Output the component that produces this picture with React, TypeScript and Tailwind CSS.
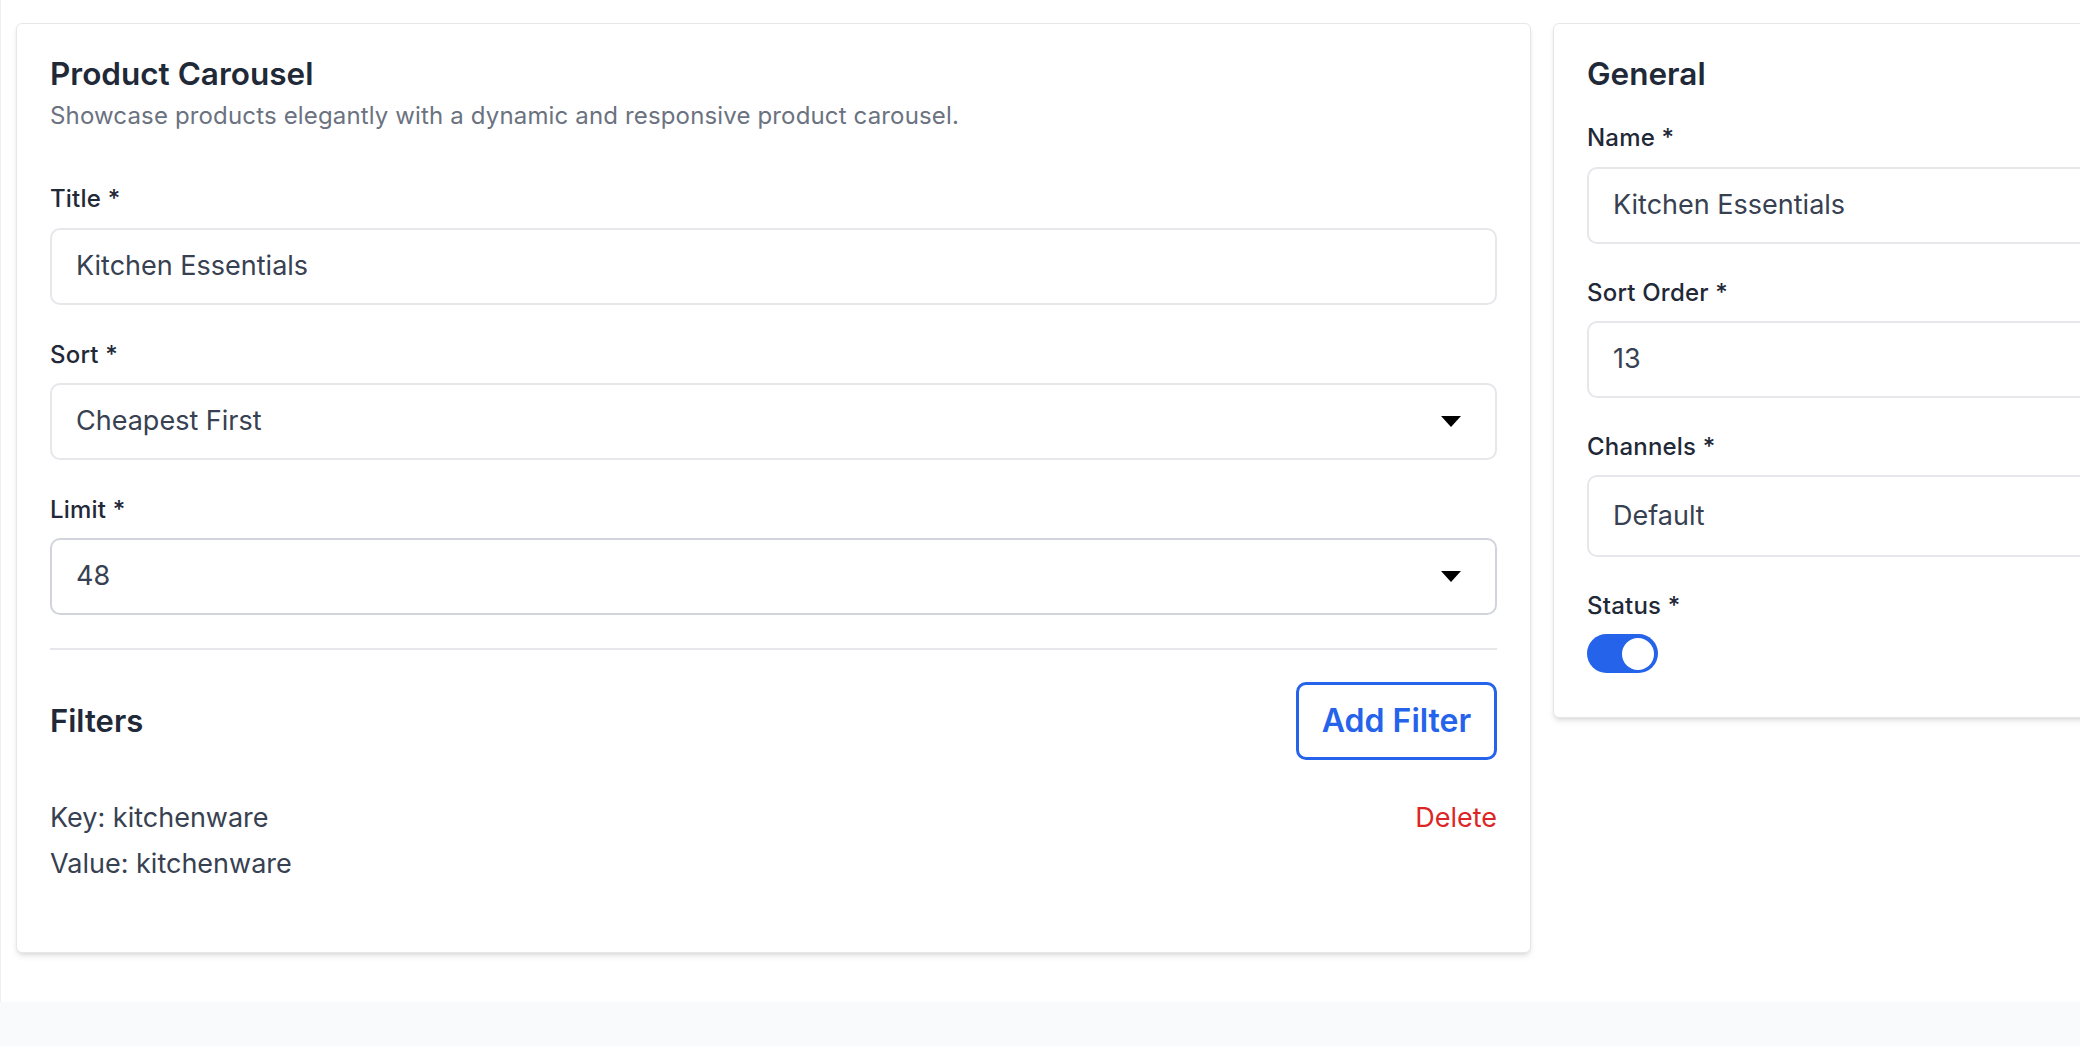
import React from 'react'

const font = { fontFamily: 'Inter, "Noto Sans", sans-serif' }

const Label = ({ children }: { children: React.ReactNode }) => (
  <label className="block text-[24px] leading-[32px] font-medium text-[#1f2937] tracking-[0.2px]">
    {children} <span>*</span>
  </label>
)

const TextInput = ({ value }: { value: string }) => (
  <div className="mt-[13px] flex h-[77px] items-center rounded-[10px] border-2 border-[#e5e7eb] bg-white pl-6 text-[27px] text-[#374151]">
    {value}
  </div>
)

const Arrow = () => (
  <svg width="20" height="11" viewBox="0 0 20 11" className="shrink-0">
    <path d="M0 0 H20 L10 11 Z" fill="#000" />
  </svg>
)

const Select = ({ value, dark }: { value: string; dark?: boolean }) => (
  <div
    className={`mt-[12px] flex h-[77px] items-center justify-between rounded-[10px] border-2 bg-white pl-6 pr-[34px] text-[27px] text-[#374151] ${
      dark ? 'border-[#d1d5db]' : 'border-[#e5e7eb]'
    }`}
  >
    <span>{value}</span>
    <Arrow />
  </div>
)

const ProductCarousel = () => (
  <div className="w-[1515px] shrink-0 rounded-[6px] border border-[#e5e7eb] bg-white px-[33px] pt-[30px] pb-[65px] shadow-md">
    <h2 className="text-[31.5px] leading-[40px] font-semibold text-[#1f2937]">Product Carousel</h2>
    <p className="mt-[6px] text-[24px] leading-[32px] text-[#6b7280] tracking-[0.15px]">
      Showcase products elegantly with a dynamic and responsive product carousel.
    </p>

    <div className="mt-[51px] flex flex-col gap-[34px]">
      <div>
        <Label>Title</Label>
        <TextInput value="Kitchen Essentials" />
      </div>
      <div>
        <Label>Sort</Label>
        <Select value="Cheapest First" />
      </div>
      <div>
        <Label>Limit</Label>
        <Select value="48" dark />
      </div>
    </div>

    <div className="mt-[33px] h-[2px] bg-[#e5e7eb]" />

    <div className="mt-[32px] flex items-center justify-between">
      <h3 className="text-[31px] leading-[38px] font-semibold text-[#1f2937]">Filters</h3>
      <button className="flex h-[78px] w-[201px] items-center justify-center rounded-[10px] border-[3px] border-[#2563eb] bg-white text-[32px] font-semibold text-[#2563eb]">
        Add Filter
      </button>
    </div>

    <div className="mt-[35px] flex items-start justify-between text-[27px] leading-[46px] text-[#374151]">
      <div>
        <div>Key: kitchenware</div>
        <div>Value: kitchenware</div>
      </div>
      <button className="text-[#dc2626]">Delete</button>
    </div>
  </div>
)

const General = () => (
  <div className="w-[700px] shrink-0 rounded-[6px] border border-[#e5e7eb] bg-white px-[33px] pt-[30px] pb-[44px] shadow-md">
    <h2 className="text-[31.5px] leading-[40px] font-semibold text-[#1f2937]">General</h2>

    <div className="mt-[28px] flex flex-col gap-[33px]">
      <div>
        <Label>Name</Label>
        <TextInput value="Kitchen Essentials" />
      </div>
      <div>
        <Label>Sort Order</Label>
        <div className="mt-[12px] flex h-[77px] items-center rounded-[10px] border-2 border-[#e5e7eb] bg-white pl-6 text-[27px] text-[#374151]">
          13
        </div>
      </div>
      <div>
        <Label>Channels</Label>
        <div className="mt-[12px] flex h-[82px] items-center rounded-[10px] border-2 border-[#e5e7eb] bg-white pl-6 text-[27px] text-[#374151]">
          Default
        </div>
      </div>
      <div>
        <Label>Status</Label>
        <div className="mt-[12px] flex h-[39px] w-[71px] items-center justify-end rounded-full bg-[#2563eb] pr-[4px]">
          <div className="h-[32px] w-[32px] rounded-full bg-white" />
        </div>
      </div>
    </div>
  </div>
)

export default function App() {
  return (
    <div className="min-h-screen bg-[#f9fafb]" style={font}>
      <div className="flex h-[1002px] items-start gap-[22px] overflow-hidden border-l border-[#f0f0f2] bg-white pt-[23px] pl-[15px]">
        <ProductCarousel />
        <General />
      </div>
    </div>
  )
}
